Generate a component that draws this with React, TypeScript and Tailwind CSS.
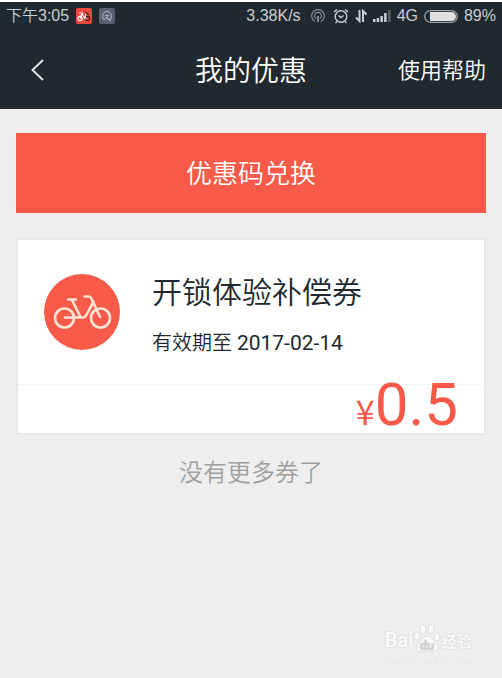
import type { ReactNode } from 'react';

interface CouponCardProps {
    name: string;
    expires: string;
    amount: string;
}

function BikeIcon() {
    return (
        <svg className="w-[76px] h-[76px] shrink-0" viewBox="0 0 76 76" fill="none" aria-hidden="true">
            <circle cx="38" cy="38" r="38" fill="#f75a48" />
            <g stroke="#ffe4d6" strokeWidth="2.6" strokeLinecap="round" strokeLinejoin="round">
                <circle cx="20.5" cy="44" r="9.5" />
                <circle cx="56.5" cy="44" r="9.5" />
                <path d="M21 43.5H39C41 43.5 41.5 42.5 42.3 41L49.5 28" />
                <path d="M24 25.5H32M28 26L36.5 43" />
                <path d="M40.5 22.5H44.5C46 22.5 46.7 23 47.4 24.5L56 43" />
            </g>
        </svg>
    );
}

function AppBadge({ color, children }: { color: string; children: ReactNode }) {
    return (
        <svg className="w-4 h-4" viewBox="0 0 16 16" fill="none" aria-hidden="true">
            <rect width="16" height="16" rx="2" fill={color} />
            {children}
        </svg>
    );
}

function StatusBar() {
    return (
        <div className="flex items-center justify-between h-7 px-[6px] text-base text-[#c9cdd0] font-['Liberation_Sans','Noto_Sans_CJK_SC',sans-serif]">
            <div className="flex items-center gap-[7px]">
                <span>下午3:05</span>
                <AppBadge color="#ee4b3c">
                    <g stroke="#fff" strokeWidth="1.2">
                        <circle cx="4" cy="10.5" r="2.2" />
                        <circle cx="11.5" cy="10.5" r="2.2" stroke="#3b1a18" />
                        <path d="M4 10.5L6 6L9 10.5L10 5M3 5H7" />
                        <path d="M9 4L13 7" stroke="#3b1a18" />
                    </g>
                </AppBadge>
                <AppBadge color="#596170">
                    <g stroke="#b9c0ca" strokeWidth="1">
                        <path d="M4 11C3 7 4.5 3.5 8 3.5S13 7 12 11H9.5M4 11L6 11.5" />
                        <path d="M6 8L8 7L10 8M7 10L12 13M6.5 10L9 8.5" />
                    </g>
                </AppBadge>
            </div>
            <div className="flex items-center gap-[6px]">
                <span className="mr-1">3.38K/s</span>
                <svg className="w-[14px] h-[14px]" viewBox="0 0 14 14" fill="none" stroke="#8b9196" strokeWidth="1.1" aria-hidden="true">
                    <path d="M4 12.5A6.3 6.3 0 1 1 10 12.5" />
                    <path d="M5 9.5A3.4 3.4 0 1 1 9 9.5" />
                    <path d="M7 7V13" strokeWidth="1.8" />
                </svg>
                <svg className="w-4 h-4 ml-[2px]" viewBox="0 0 16 16" fill="none" stroke="#c9cdd0" strokeWidth="1.4" aria-hidden="true">
                    <circle cx="8" cy="8.5" r="5.8" />
                    <path d="M5.5 7.5L8 9.5L10.5 7.5M1 4L4 1.5M15 4L12 1.5M4 13.5L2.5 15M12 13.5L13.5 15" />
                </svg>
                <svg className="w-3 h-[14px]" viewBox="0 0 12 14" fill="none" stroke="#c9cdd0" strokeWidth="2" aria-hidden="true">
                    <path d="M4.5 1V12L1 8.5M8 13V2L11.5 5.5" />
                </svg>
                <svg className="w-[18px] h-3" viewBox="0 0 18 12" fill="#c9cdd0" aria-hidden="true">
                    <path d="M0 9h2.5v3H0zM3.7 8h2.5v4H3.7zM7.4 6h2.5v6H7.4zM11.1 3h2.5v9h-2.5z" />
                    <path d="M15 0h2.5v12H15z" fill="#59616a" />
                </svg>
                <span>4G</span>
                <svg className="w-[34px] h-[13px]" viewBox="0 0 34 13" fill="none" aria-hidden="true">
                    <rect x="0.7" y="0.7" width="32.6" height="11.6" rx="5.8" stroke="#9ba0a4" strokeWidth="1.3" />
                    <path d="M6 2H27.5A4.5 4.5 0 0 1 27.5 11H6Z" fill="#dfe1e2" />
                </svg>
                <span>89%</span>
            </div>
        </div>
    );
}

function CouponCard({ name, expires, amount }: CouponCardProps) {
    return (
        <article className="bg-white border-2 border-[#e8e8e8] text-[#20292f]">
            <div className="flex items-center gap-8 h-[145px] px-[26px] border-b border-[#f3f3f3]">
                <BikeIcon />
                <div className="pt-3">
                    <h2 className="text-[30px] leading-[50px] font-[350]">{name}</h2>
                    <p className="text-xl leading-[50px]">
                        有效期至 <time className="text-[21px] font-normal">{expires}</time>
                    </p>
                </div>
            </div>
            <p className="flex items-baseline justify-end h-12 pr-[26px] leading-[40px] font-normal text-[#f75a48]">
                <span className="text-[34px] font-['Noto_Sans_CJK_SC',sans-serif]">¥</span>
                <span className="text-[60px]">{amount}</span>
            </p>
        </article>
    );
}

function Watermark() {
    return (
        <footer className="mt-auto self-end mr-7 mb-2 text-[#fafafa]">
            <div className="flex items-end leading-6 font-bold [text-shadow:0_0_2px_#c4c4c4]">
                <span className="text-xl">Bai</span>
                <svg className="w-7 h-[30px]" viewBox="0 0 28 30" fill="#fafafa" stroke="#dcdcdc" aria-hidden="true">
                    <ellipse cx="4" cy="12" rx="3" ry="4" />
                    <ellipse cx="10" cy="5" rx="3" ry="4.5" />
                    <ellipse cx="18" cy="5" rx="3" ry="4.5" />
                    <ellipse cx="24" cy="13" rx="3" ry="4" />
                    <path d="M14 12C18 12 19 16 22 18C26 21 26 28 20 28C17 28 16 27 14 27S11 28 8 28C2 28 2 21 6 18C9 16 10 12 14 12Z" />
                    <text x="14" y="26" textAnchor="middle" fill="#d2d2d2" stroke="none" fontSize="13">du</text>
                </svg>
                <span className="text-[15px]">经验</span>
            </div>
            <div className="text-[11px] leading-4 font-normal [text-shadow:0_0_1px_#c8c8c8]">jingyan.baidu.com</div>
        </footer>
    );
}

export default function App() {
    return (
        <div className="flex flex-col min-h-screen bg-[#eeeeee] border-t-2 border-white font-[Roboto,'Noto_Sans_CJK_SC',sans-serif] font-[350]">
            <header className="bg-[#20292f] text-white">
                <StatusBar />
                <div className="grid grid-cols-[1fr_auto_1fr] items-center h-[79px] px-4">
                    <button type="button" aria-label="返回" className="justify-self-start p-3">
                        <svg className="w-5 h-6" viewBox="0 0 20 24" fill="none" stroke="#dfe2e4" strokeWidth="2" aria-hidden="true">
                            <path d="M15 2L4.5 12L15 22" />
                        </svg>
                    </button>
                    <h1 className="pt-1 text-[28px] font-[350]">我的优惠</h1>
                    <a href="#help" className="justify-self-end pt-[2px] text-[22px]">使用帮助</a>
                </div>
            </header>
            <main className="flex flex-col px-4 pt-6">
                <button type="button" className="h-20 mb-[25px] pt-[3px] bg-[#f75a48] text-[26px] text-white">
                    优惠码兑换
                </button>
                <CouponCard name="开锁体验补偿券" expires="2017-02-14" amount="0.5" />
                <p className="mt-5 text-center text-2xl leading-9 text-[#a0a0a0]">没有更多券了</p>
            </main>
            <Watermark />
        </div>
    );
}
